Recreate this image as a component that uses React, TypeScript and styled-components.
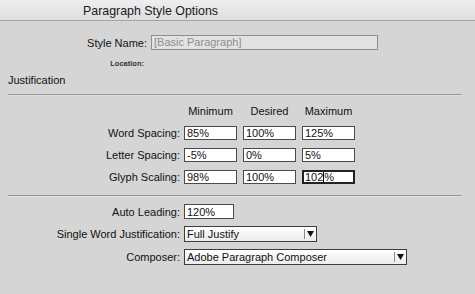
import styled, { createGlobalStyle } from 'styled-components'

const GlobalStyle = createGlobalStyle`
  html, body {
    margin: 0;
    padding: 0;
    background: #d5d5d5;
  }
  body {
    font-family: "Liberation Sans", Arial, sans-serif;
    color: #111;
    width: 475px;
    height: 294px;
    overflow: hidden;
  }
`

interface SpacingRow {
  label: string;
  values: string[];
}

const spacingRows: SpacingRow[] = [
  { label: 'Word Spacing:', values: ['85%', '100%', '125%'] },
  { label: 'Letter Spacing:', values: ['-5%', '0%', '5%'] },
  { label: 'Glyph Scaling:', values: ['98%', '100%', '102%'] },
]

const Arrow = () => (
  <svg width="7" height="6" viewBox="0 0 7 6">
    <polygon points="0,0 7,0 3.5,6" fill="#111" />
  </svg>
)

const App = () => {
  return (
    <>
      <GlobalStyle />
      <Dialog>
        <TitleBar>Paragraph Style Options</TitleBar>
        <Content>
          <NameRow>
            <NameLabel>Style Name:</NameLabel>
            <NameField>[Basic Paragraph]</NameField>
          </NameRow>
          <LocationRow>Location:</LocationRow>
          <Section>Justification</Section>
          <Rule />
          <SpacingGrid>
            <span />
            <Header>Minimum</Header>
            <Header>Desired</Header>
            <Header>Maximum</Header>
            {spacingRows.map((row, r) => (
              <Row key={row.label}>
                <Label>{row.label}</Label>
                {row.values.map((v, i) => {
                  const focused = r === 2 && i === 2
                  return (
                    <Field key={i} $focused={focused}>
                      {focused ? (
                        <>
                          102<Caret />%
                        </>
                      ) : (
                        v
                      )}
                    </Field>
                  )
                })}
              </Row>
            ))}
          </SpacingGrid>
          <Rule $gap={11} />
          <BottomGrid>
            <Label>Auto Leading:</Label>
            <Field $width={50} $height={15}>120%</Field>
            <Label>Single Word Justification:</Label>
            <Select $width={133}>
              <span>Full Justify</span>
              <ArrowBox><Arrow /></ArrowBox>
            </Select>
            <Label>Composer:</Label>
            <Select $width={223}>
              <span>Adobe Paragraph Composer</span>
              <ArrowBox><Arrow /></ArrowBox>
            </Select>
          </BottomGrid>
        </Content>
      </Dialog>
    </>
  )
}

const Dialog = styled.div`
  width: 475px;
  height: 294px;
  background: #d5d5d5;
`

const TitleBar = styled.div`
  height: 20px;
  line-height: 22px;
  padding-left: 83px;
  font-size: 12.4px;
  color: #1a1a1a;
  background: linear-gradient(#eeeeee, #dedede);
  border-bottom: 1px solid #a6a6a6;
`

const Content = styled.div`
  padding: 14px 13px 0 8px;
`

const NameRow = styled.div`
  display: flex;
  align-items: center;
  height: 15px;
`

const NameLabel = styled.div`
  width: 139px;
  text-align: right;
  font-size: 11px;
  padding-right: 4px;
`

const NameField = styled.div`
  box-sizing: border-box;
  width: 227px;
  height: 15px;
  border: 1px solid #8e8e8e;
  background: #e2e2e2;
  color: #8f8f8f;
  font-size: 11px;
  line-height: 13px;
  padding-left: 2px;
`

const LocationRow = styled.div`
  margin-top: 9px;
  width: 136px;
  text-align: right;
  font-size: 7.5px;
  font-weight: bold;
  color: #333;
  line-height: 10px;
`

const Section = styled.div`
  margin-top: 5px;
  font-size: 11px;
  line-height: 13px;
`

const Rule = styled.div<{ $gap?: number }>`
  margin-top: ${p => p.$gap ?? 7}px;
  height: 1px;
  background: #959595;
  border-bottom: 1px solid #e0e0e0;
`

const SpacingGrid = styled.div`
  margin-top: 9px;
  display: grid;
  grid-template-columns: 176px 59px 59px 59px;
  row-gap: 8px;
`

const Row = styled.div`
  display: contents;
`

const Header = styled.div`
  width: 53px;
  text-align: center;
  font-size: 11px;
  line-height: 13px;
`

const Label = styled.div`
  text-align: right;
  padding-right: 4px;
  font-size: 11px;
  align-self: center;
  white-space: nowrap;
`

const Field = styled.div<{ $focused?: boolean; $width?: number; $height?: number }>`
  box-sizing: border-box;
  width: ${p => p.$width ?? 53}px;
  height: ${p => p.$height ?? 14}px;
  background: #fff;
  border: ${p => (p.$focused ? '2px solid #222' : '1px solid #4a4a4a')};
  font-size: 11px;
  padding-left: ${p => (p.$focused ? 1 : 2)}px;
  display: flex;
  align-items: center;
  white-space: nowrap;
`

const Caret = styled.span`
  display: inline-block;
  width: 1px;
  height: 11px;
  background: #111;
`

const BottomGrid = styled.div`
  margin-top: 7px;
  display: grid;
  grid-template-columns: 176px auto;
  justify-content: start;
  row-gap: 7px;
`

const Select = styled.div<{ $width: number }>`
  box-sizing: border-box;
  width: ${p => p.$width}px;
  height: 16px;
  display: flex;
  align-items: center;
  justify-content: space-between;
  border: 1px solid #3c3c3c;
  background: linear-gradient(#ffffff, #ececec);
  font-size: 11px;
  padding-left: 2px;
  white-space: nowrap;
`

const ArrowBox = styled.div`
  height: 10px;
  width: 11px;
  border-left: 1px solid #888;
  display: flex;
  align-items: center;
  justify-content: center;
`

export default App
